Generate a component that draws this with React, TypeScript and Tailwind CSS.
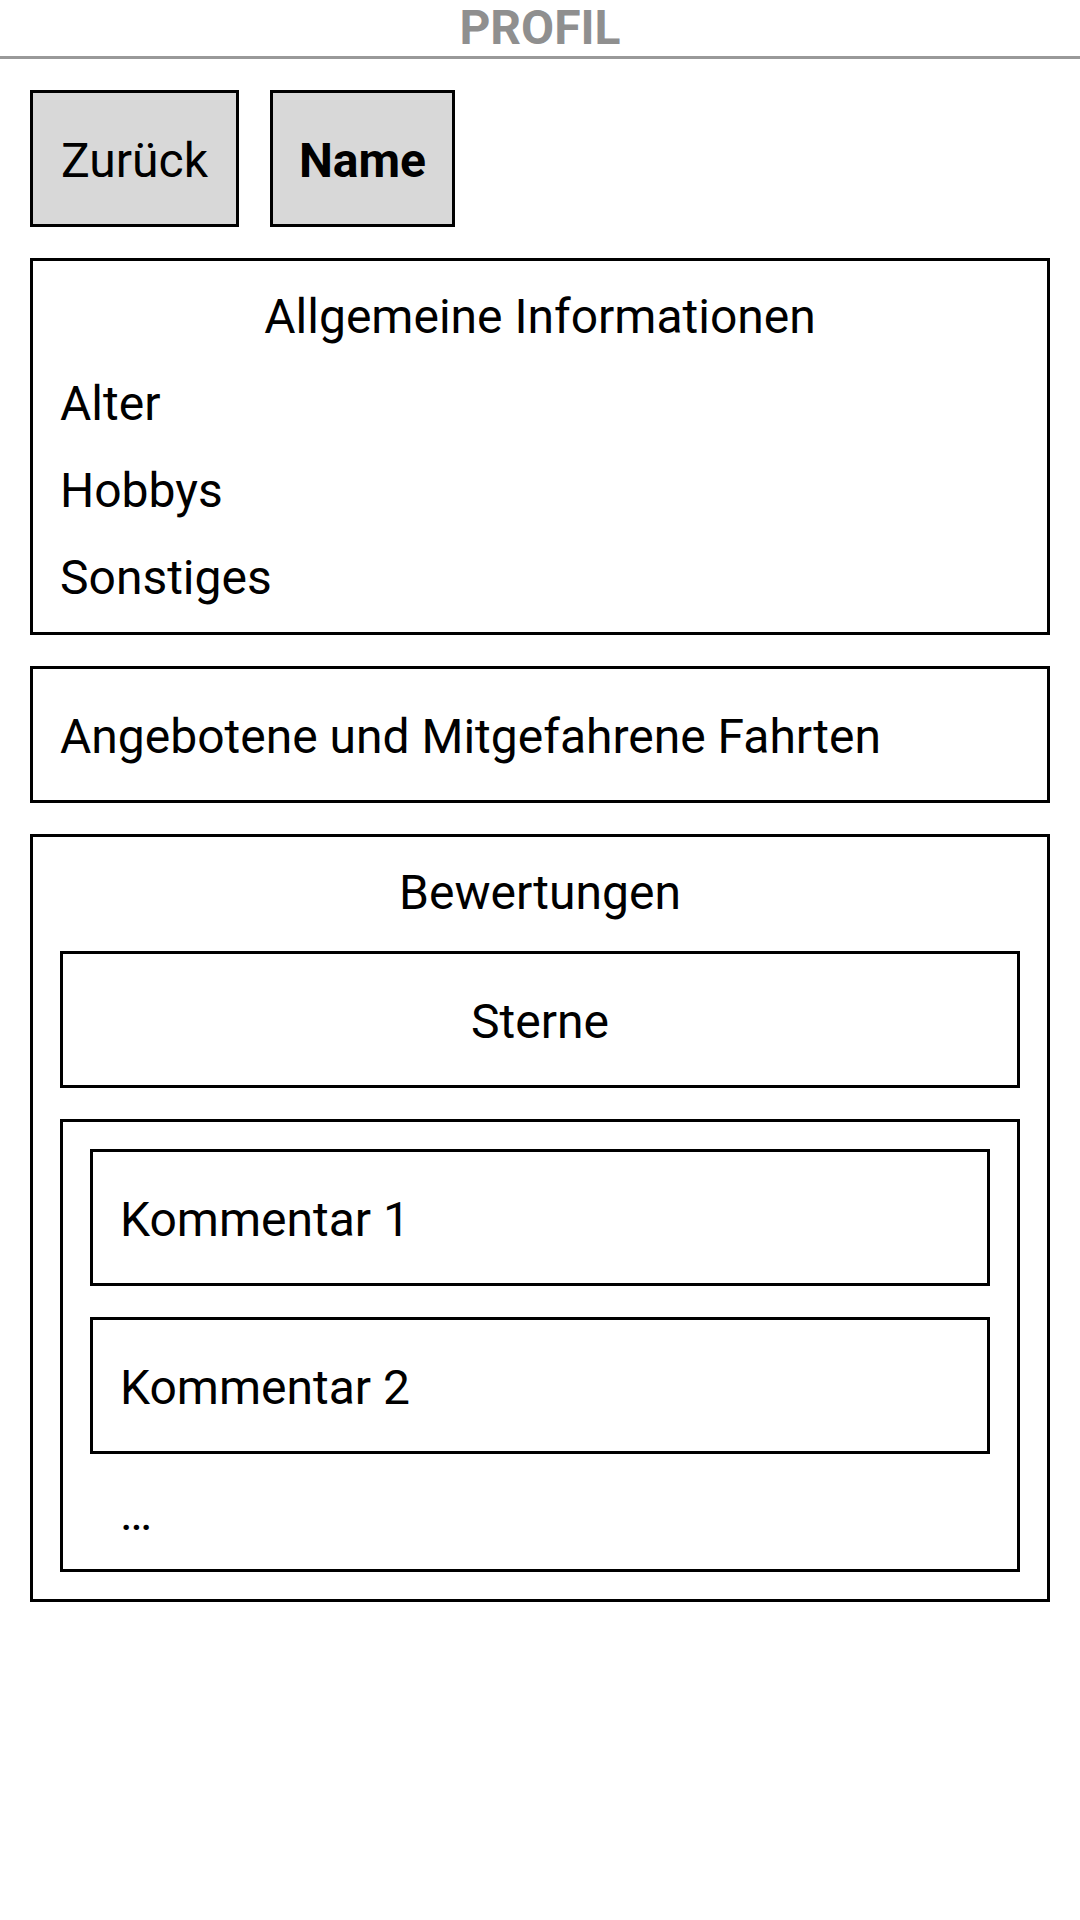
import React from "react";

export default function App() {
  return (
    <div className="w-[1080px] h-[1920px] bg-white font-['Roboto',sans-serif] text-black">
      <header className="h-[59px] border-b-[3px] border-[#999999] flex justify-center">
        <span className="text-[48px] font-bold leading-[56px] text-[#8f8f8f]">PROFIL</span>
      </header>
      <main className="px-[30px] pt-[31px] flex flex-col gap-[31px] text-[48px] leading-[56px]">
        <div className="flex gap-[31px]">
          <button className="w-[209px] h-[137px] pt-[4px] border-[3px] border-black bg-[#d8d8d8] flex items-center justify-center text-[48px] leading-[56px]">
            Zurück
          </button>
          <button className="w-[185px] h-[137px] pt-[4px] border-[3px] border-black bg-[#d8d8d8] flex items-center justify-center text-[48px] leading-[56px] font-bold">
            Name
          </button>
        </div>

        <section className="border-[3px] border-black pt-[28px] pb-[26px] px-[27px] flex flex-col gap-[31px]">
          <div className="text-center">Allgemeine Informationen</div>
          <div>Alter</div>
          <div>Hobbys</div>
          <div>Sonstiges</div>
        </section>

        <section className="h-[137px] pt-[4px] border-[3px] border-black flex items-center px-[27px]">
          Angebotene und Mitgefahrene Fahrten
        </section>

        <section className="border-[3px] border-black pt-[28px] pb-[27px] px-[27px] flex flex-col">
          <div className="text-center">Bewertungen</div>
          <div className="mt-[30px] h-[137px] pt-[4px] border-[3px] border-black flex items-center justify-center">
            Sterne
          </div>
          <div className="mt-[31px] border-[3px] border-black pt-[27px] pb-[27px] px-[27px] flex flex-col">
            <div className="h-[137px] pt-[4px] border-[3px] border-black flex items-center px-[27px]">
              Kommentar 1
            </div>
            <div className="mt-[31px] h-[137px] pt-[4px] border-[3px] border-black flex items-center px-[27px]">
              Kommentar 2
            </div>
            <div className="mt-[32px] px-[30px]">…</div>
          </div>
        </section>
      </main>
    </div>
  );
}
